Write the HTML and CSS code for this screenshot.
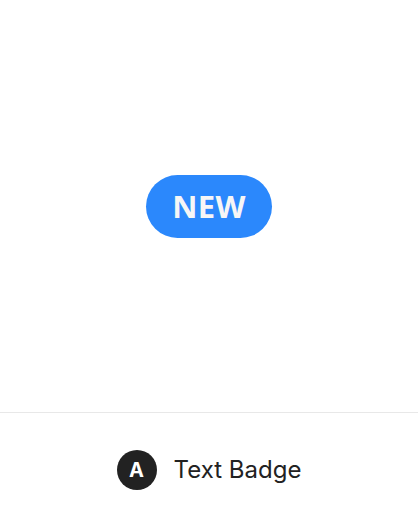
FILE: index.html
```html
<!DOCTYPE html>
<html>
<head>
<meta charset="utf-8">
<link rel="stylesheet" href="styles.css">
</head>
<body>
<div class="page">
  <main class="stage">
    <span class="badge">NEW</span>
  </main>
  <footer class="caption">
    <span class="avatar">A</span>
    <span class="label">Text Badge</span>
  </footer>
</div>
</body>
</html>
```
FILE: styles.css
```css
html, body {
  margin: 0;
  padding: 0;
  background: #ffffff;
}
.page {
  width: 418px;
  height: 526px;
  display: flex;
  flex-direction: column;
}
.stage {
  height: 412px;
  display: flex;
  align-items: center;
  justify-content: center;
  border-bottom: 1px solid #e8e8e8;
}
.badge {
  box-sizing: border-box;
  width: 126px;
  height: 63px;
  border-radius: 32px;
  background: #2b88fc;
  color: #f6f6f6;
  font-family: "Open Sans", sans-serif;
  font-weight: 700;
  font-size: 31px;
  display: flex;
  align-items: center;
  justify-content: center;
  letter-spacing: 0.3px;
}
.caption {
  flex: 1;
  display: flex;
  align-items: center;
  justify-content: center;
  gap: 17px;
}
.avatar {
  width: 40px;
  height: 40px;
  border-radius: 50%;
  background: #222222;
  color: #ffffff;
  font-family: "Inter", sans-serif;
  font-weight: 700;
  font-size: 20px;
  display: flex;
  align-items: center;
  justify-content: center;
}
.label {
  font-family: "Inter", sans-serif;
  font-size: 24px;
  color: #222222;
}
```
